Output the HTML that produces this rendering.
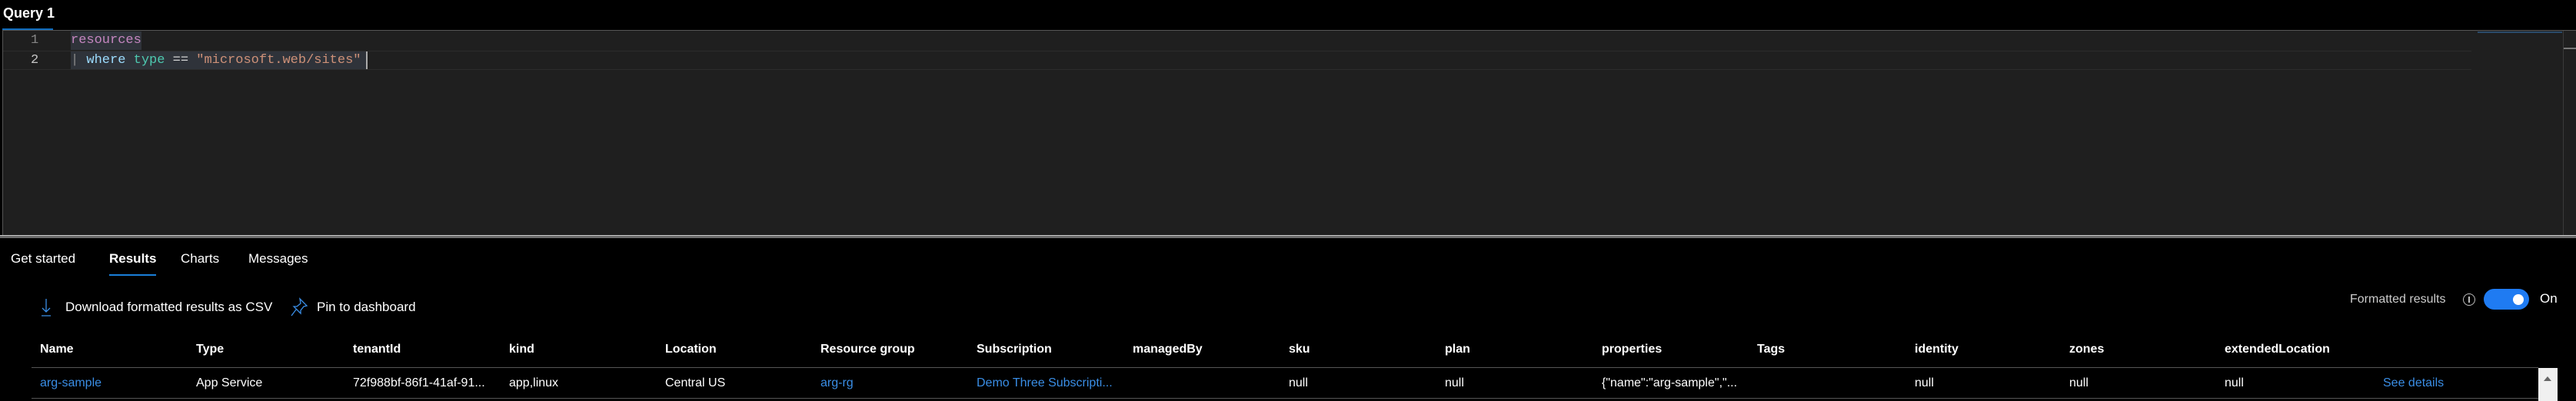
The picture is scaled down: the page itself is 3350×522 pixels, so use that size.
<!DOCTYPE html>
<html><head><meta charset="utf-8"><style>
*{margin:0;padding:0;box-sizing:border-box}
body{width:3350px;height:522px;background:#000;position:relative;overflow:hidden;font-family:"Liberation Sans",sans-serif;color:#fff}
.a{position:absolute;white-space:nowrap}
.mono{font-family:"Liberation Mono",monospace;font-size:17px}
.h{font-weight:bold;font-size:16px;top:446px}
.d{font-size:16px;top:490px}
.lk{color:#3a8ee6}
</style></head><body>
<div class="a" style="left:4px;top:7px;font-size:18px;font-weight:bold">Query 1</div>
<div class="a" style="left:3px;top:37px;width:66px;height:2px;background:#0f6cbd"></div>
<!-- editor -->
<div class="a" style="left:3px;top:39px;width:3347px;height:268px;background:#1f1f1f;border-top:1px solid #555;border-left:1px solid #555"></div>
<div class="a" style="left:4px;top:66px;width:3210px;height:1px;background:#2c2c2c"></div>
<div class="a" style="left:4px;top:90px;width:3210px;height:1px;background:#2c2c2c"></div>
<div class="a" style="left:92px;top:41px;width:92px;height:24px;background:#2f333a"></div>
<div class="a" style="left:92px;top:67px;width:386px;height:23px;background:#2f333a"></div>
<div class="a" style="left:476px;top:67px;width:2px;height:23px;background:#aaa"></div>
<div class="a mono" style="left:40px;top:43px;color:#858585">1</div>
<div class="a mono" style="left:40px;top:69px;color:#c6c6c6">2</div>
<div class="a mono" style="left:92px;top:43px;color:#c586c0">resources</div>
<div class="a mono" style="left:92px;top:69px;color:#d4d4d4"><span style="color:#888">|</span> <span style="color:#9cdcfe">where</span> <span style="color:#4ec9b0">type</span> == <span style="color:#ce9178">"microsoft.web/sites"</span></div>
<div class="a" style="left:3222px;top:41px;width:110px;height:2px;background:#2a4a6a"></div>
<div class="a" style="left:3333px;top:40px;width:1px;height:267px;background:#3a3a3a"></div>
<div class="a" style="left:3334px;top:62px;width:16px;height:2px;background:#777"></div>
<div class="a" style="left:0;top:307px;width:3350px;height:3px;background:#6b6b6b"></div>
<div class="a" style="left:0;top:306px;width:3350px;height:1px;background:#ccc"></div>
<!-- tabs -->
<div class="a" style="left:14px;top:327px;font-size:17px">Get started</div>
<div class="a" style="left:142px;top:327px;font-size:17px;font-weight:bold">Results</div>
<div class="a" style="left:142px;top:357px;width:61px;height:2px;background:#1a7fd9"></div>
<div class="a" style="left:235px;top:327px;font-size:17px">Charts</div>
<div class="a" style="left:323px;top:327px;font-size:17px">Messages</div>
<!-- actions -->
<svg class="a" style="left:53px;top:388px" width="14" height="24" viewBox="0 0 14 24"><path d="M7 1v17M2 13l5 5 5-5M1 23h12" stroke="#3a8ee6" stroke-width="1.3" fill="none"/></svg>
<div class="a" style="left:85px;top:390px;font-size:17px">Download formatted results as CSV</div>
<svg class="a" style="left:377px;top:387px" width="24" height="26" viewBox="0 0 24 26"><path d="M13 2l9 9-4 1-4 5 0 4-9-9 4 0 5-4z M8 16l-6 8" stroke="#3a8ee6" stroke-width="1.3" fill="none"/></svg>
<div class="a" style="left:412px;top:390px;font-size:17px">Pin to dashboard</div>
<div class="a" style="left:3056px;top:381px;font-size:16px;color:#ccc">Formatted results</div>
<div class="a" style="left:3203px;top:382px;width:16px;height:16px;border:1.3px solid #bbb;border-radius:50%"></div>
<div class="a" style="left:3210px;top:386px;width:2px;height:8px;background:#bbb"></div>
<div class="a" style="left:3230px;top:376px;width:59px;height:27px;background:#1f7bf2;border-radius:14px"></div>
<div class="a" style="left:3268px;top:383px;width:14px;height:14px;background:#fff;border-radius:50%"></div>
<div class="a" style="left:3303px;top:379px;font-size:17px">On</div>
<!-- table -->
<div class="a h" style="left:52px">Name</div>
<div class="a h" style="left:255px">Type</div>
<div class="a h" style="left:459px">tenantId</div>
<div class="a h" style="left:662px">kind</div>
<div class="a h" style="left:865px">Location</div>
<div class="a h" style="left:1067px">Resource group</div>
<div class="a h" style="left:1270px">Subscription</div>
<div class="a h" style="left:1473px">managedBy</div>
<div class="a h" style="left:1676px">sku</div>
<div class="a h" style="left:1879px">plan</div>
<div class="a h" style="left:2083px">properties</div>
<div class="a h" style="left:2285px">Tags</div>
<div class="a h" style="left:2490px">identity</div>
<div class="a h" style="left:2691px">zones</div>
<div class="a h" style="left:2893px">extendedLocation</div>
<div class="a" style="left:41px;top:478px;width:3260px;height:1px;background:#555"></div>
<div class="a" style="left:41px;top:518px;width:3260px;height:1px;background:#555"></div>
<div class="a d lk" style="left:52px">arg-sample</div>
<div class="a d" style="left:255px">App Service</div>
<div class="a d" style="left:459px">72f988bf-86f1-41af-91...</div>
<div class="a d" style="left:662px">app,linux</div>
<div class="a d" style="left:865px">Central US</div>
<div class="a d lk" style="left:1067px">arg-rg</div>
<div class="a d lk" style="left:1270px">Demo Three Subscripti...</div>
<div class="a d" style="left:1676px">null</div>
<div class="a d" style="left:1879px">null</div>
<div class="a d" style="left:2083px">{"name":"arg-sample","...</div>
<div class="a d" style="left:2490px">null</div>
<div class="a d" style="left:2691px">null</div>
<div class="a d" style="left:2893px">null</div>
<div class="a d lk" style="left:3099px">See details</div>
<div class="a" style="left:3301px;top:479px;width:25px;height:43px;background:#f0f0f0"></div>
<div class="a" style="left:3308px;top:490px;width:0;height:0;border-left:5px solid transparent;border-right:5px solid transparent;border-bottom:6px solid #666"></div>
</body></html>
